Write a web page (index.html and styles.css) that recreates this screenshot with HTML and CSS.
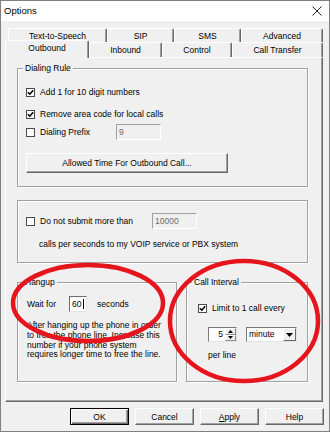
FILE: index.html
```html
<!DOCTYPE html>
<html>
<head>
<meta charset="utf-8">
<title>Options</title>
<link rel="stylesheet" href="styles.css">
</head>
<body>
<div class="window">
  <div class="titlebar">
    <span class="title">Options</span>
    <svg class="close" viewBox="0 0 10 10" width="10" height="10"><path d="M0.5 0.5 L9.5 9.5 M9.5 0.5 L0.5 9.5" stroke="#222" stroke-width="1" fill="none"/></svg>
  </div>
  <div class="tabs">
    <div class="tabrow row1">
      <div class="tab w-tts">Text-to-Speech</div>
      <div class="tab w-sip">SIP</div>
      <div class="tab w-sms">SMS</div>
      <div class="tab w-adv">Advanced</div>
    </div>
    <div class="tabrow row2">
      <div class="tab selected w-out">Outbound</div>
      <div class="tab w-in">Inbound</div>
      <div class="tab w-ctl">Control</div>
      <div class="tab w-ct">Call Transfer</div>
    </div>
  </div>
  <div class="panel">
    <div class="group dialing">
      <div class="gtitle">Dialing Rule</div>
      <div class="row r1"><span class="cb"><svg viewBox="0 0 7 7" width="7" height="7"><path d="M0.8 3.2 L2.8 5.2 L6.2 1.2" stroke="#000" stroke-width="1.5" fill="none"/></svg></span><span>Add 1 for 10 digit numbers</span></div>
      <div class="row r2"><span class="cb"><svg viewBox="0 0 7 7" width="7" height="7"><path d="M0.8 3.2 L2.8 5.2 L6.2 1.2" stroke="#000" stroke-width="1.5" fill="none"/></svg></span><span>Remove area code for local calls</span></div>
      <div class="row r3"><span class="cb"></span><span class="lbl-prefix">Dialing Prefix</span><span class="edit disabled e-prefix">9</span></div>
      <div class="btn bigbtn">Allowed Time For Outbound Call...</div>
    </div>
    <div class="group g2">
      <div class="row r4"><span class="cb"></span><span class="lbl-submit">Do not submit more than</span><span class="edit disabled e-submit">10000</span></div>
      <div class="calls">calls per seconds to my VOIP service or PBX system</div>
    </div>
    <div class="bottomgroups">
      <div class="group hangup">
        <div class="gtitle">Hangup</div>
        <div class="waitrow"><span class="waitlbl">Wait for</span><span class="edit e-wait">60<i class="caret"></i></span><span class="secs">seconds</span></div>
        <div class="para">After hanging up the phone in order<br>to free the phone line. Increase this<br>number if your phone system<br>requires longer time to free the line.</div>
      </div>
      <div class="group interval">
        <div class="gtitle">Call Interval</div>
        <div class="row limrow"><span class="cb"><svg viewBox="0 0 7 7" width="7" height="7"><path d="M0.8 3.2 L2.8 5.2 L6.2 1.2" stroke="#000" stroke-width="1.5" fill="none"/></svg></span><span>Limit to 1 call every</span></div>
        <div class="spinrow">
          <div class="spin"><span class="spinval">5</span><span class="spinbtns"><span class="sb"><svg viewBox="0 0 5 3" width="5" height="3"><path d="M0 3 L2.5 0 L5 3 Z" fill="#000"/></svg></span><span class="sb"><svg viewBox="0 0 5 3" width="5" height="3"><path d="M0 0 L2.5 3 L5 0 Z" fill="#000"/></svg></span></span></div>
          <div class="combo"><span class="comboval">minute</span><span class="combobtn"><svg viewBox="0 0 7 4" width="7" height="4"><path d="M0 0 L3.5 4 L7 0 Z" fill="#000"/></svg></span></div>
        </div>
        <div class="perline">per line</div>
      </div>
    </div>
  </div>
  <div class="btnbar">
    <div class="btn dbtn default">OK</div>
    <div class="btn dbtn">Cancel</div>
    <div class="btn dbtn"><u>A</u>pply</div>
    <div class="btn dbtn">Help</div>
  </div>
  <svg class="annot" viewBox="0 0 330 432" width="330" height="432">
    <ellipse cx="88" cy="303" rx="75" ry="38" fill="none" stroke="#e6141c" stroke-width="4.5"/>
    <ellipse cx="244" cy="321" rx="74" ry="60" fill="none" stroke="#e6141c" stroke-width="4.5"/>
  </svg>
</div>
</body>
</html>
```
FILE: styles.css
```css
* { box-sizing: border-box; margin: 0; padding: 0; }
html, body { width: 330px; height: 432px; overflow: hidden; }
body {
  font-family: "Liberation Sans", Arial, sans-serif;
  font-size: 8.5px;
  color: #000;
  background: #f0f0f0;
}
.window {
  position: relative;
  width: 330px;
  height: 432px;
  border: 1px solid #808080;
  background: #f0f0f0;
  display: flex;
  flex-direction: column;
}
.titlebar {
  flex: none;
  height: 20px;
  background: #fff;
  display: flex;
  align-items: center;
  padding-left: 3px;
}
.title { font-size: 9.5px; line-height: 12px; }
.close { margin-left: auto; margin-right: 7px; }

/* tabs */
.tabs { flex: none; margin-top: 7px; }
.tabrow { display: flex; align-items: flex-start; }
.row1 { margin-left: 7px; height: 14px; }
.row2 { margin-left: 4px; height: 15px; }
.tab {
  flex: none;
  text-align: center;
  background: #f0f0f0;
  border: 1px solid;
  border-color: #fff #696969 transparent #fff;
  border-bottom: 0;
  border-radius: 2px 2px 0 0;
  box-shadow: inset -1px 0 0 #a0a0a0;
  line-height: 14px;
  white-space: nowrap;
}
.row1 .tab { height: 14px; }
.row2 .tab { height: 15px; }
.row2 .tab.selected {
  position: relative;
  z-index: 2;
  margin-top: -2px;
  height: 18px;
  line-height: 15px;
}
.w-tts { width: 99px; }
.w-sip { width: 67px; }
.w-sms { width: 67px; }
.w-adv { width: 82px; }
.w-out { width: 84px; }
.w-in { width: 73px; }
.w-ctl { width: 70px; }
.w-ct { width: 91px; }

/* panel */
.panel {
  flex: none;
  margin-left: 4px;
  width: 318px;
  height: 345px;
  border: 1px solid;
  border-color: #fff #696969 #696969 #fff;
  box-shadow: inset -1px -1px 0 #a0a0a0;
  padding: 10px 14px 0 11px;
}

/* group boxes */
.group {
  border: 1px solid #a0a0a0;
  box-shadow: 1px 1px 0 #fff, inset 1px 1px 0 #fff;
}
.gtitle {
  width: fit-content;
  height: 10px;
  line-height: 10px;
  margin: -6px 0 0 5px;
  padding: 0 2px;
  background: #f0f0f0;
  white-space: nowrap;
}
.row { display: flex; align-items: center; padding-left: 8px; white-space: nowrap; }
.cb {
  flex: none;
  width: 9px;
  height: 9px;
  border: 1px solid #4a4a4a;
  background: #fff;
  margin-right: 5px;
  display: flex;
  align-items: center;
  justify-content: center;
}
.cb svg { display: block; }

.dialing { height: 119px; }
.r1 { margin-top: 13px; height: 12px; }
.r2 { margin-top: 10px; height: 12px; }
.r3 { margin-top: 4px; height: 16px; }
.lbl-prefix { width: 76px; flex: none; }

.edit {
  flex: none;
  display: flex;
  align-items: center;
  height: 16px;
  padding-left: 2px;
  border: 1px solid;
  border-color: #7a7a7a #e3e3e3 #e3e3e3 #7a7a7a;
  background: #fff;
}
.edit.disabled {
  background: #f0f0f0;
  color: #6d6d6d;
  border-color: #a0a0a0 #fff #fff #a0a0a0;
}
.e-prefix { width: 45px; }
.e-submit { width: 45px; }

.btn {
  display: flex;
  align-items: center;
  justify-content: center;
  background: #f0f0f0;
  border: 1px solid;
  border-color: #fff #696969 #696969 #fff;
  box-shadow: inset -1px -1px 0 #a0a0a0;
  white-space: nowrap;
}
.bigbtn { margin: 13px 0 0 8px; width: 202px; height: 20px; }

.g2 { margin-top: 13px; height: 63px; padding-top: 12px; }
.r4 { height: 16px; }
.lbl-submit { width: 112px; flex: none; }
.calls { margin-top: 10px; line-height: 10px; padding-left: 21px; white-space: nowrap; }

.bottomgroups { display: flex; gap: 9px; margin-top: 19px; }
.hangup { width: 160px; height: 100px; }
.interval { width: 122px; height: 100px; }

.waitrow { display: flex; align-items: center; margin-top: 9px; height: 16px; padding-left: 9px; white-space: nowrap; }
.waitlbl { width: 42px; flex: none; }
.e-wait { width: 18px; border-color: #6d6d6d #e3e3e3 #e3e3e3 #6d6d6d; }
.caret { display: block; width: 1px; height: 10px; background: #000; margin-left: 2px; }
.secs { margin-left: 10px; }
.para { margin-top: 9px; padding-left: 9px; line-height: 9.8px; white-space: nowrap; }

.limrow { margin-top: 15px; height: 12px; padding-left: 11px; }
.spinrow { display: flex; gap: 9px; margin-top: 13px; height: 15px; padding-left: 21px; }
.spin {
  width: 29px;
  height: 15px;
  display: flex;
  border: 1px solid;
  border-color: #7a7a7a #e3e3e3 #e3e3e3 #7a7a7a;
  background: #fff;
}
.spinval { flex: 1; text-align: right; line-height: 13px; padding-right: 2px; }
.spinbtns { width: 11px; display: flex; flex-direction: column; }
.sb {
  flex: 1;
  display: flex;
  align-items: center;
  justify-content: center;
  background: #f0f0f0;
  border: 1px solid;
  border-color: #fff #8a8a8a #8a8a8a #fff;
}
.sb svg { display: block; }
.combo {
  width: 51px;
  height: 15px;
  display: flex;
  border: 1px solid;
  border-color: #7a7a7a #e3e3e3 #e3e3e3 #7a7a7a;
  background: #fff;
}
.comboval { flex: 1; line-height: 13px; padding-left: 2px; }
.combobtn {
  width: 13px;
  display: flex;
  align-items: center;
  justify-content: center;
  background: #f0f0f0;
  border: 1px solid;
  border-color: #fff #696969 #696969 #fff;
}
.combobtn svg { display: block; }
.perline { margin-top: 8px; padding-left: 21px; line-height: 10px; }

.btnbar { flex: none; display: flex; justify-content: flex-end; gap: 6px; margin-top: 6px; padding-right: 5px; }
.dbtn { width: 59px; height: 17px; }
.dbtn.default {
  border: 1px solid #000;
  box-shadow: inset 1px 1px 0 #fff, inset -1px -1px 0 #696969, inset -2px -2px 0 #a0a0a0;
}
u { text-decoration: underline; }

.annot { position: absolute; left: -1px; top: -1px; pointer-events: none; }
```
